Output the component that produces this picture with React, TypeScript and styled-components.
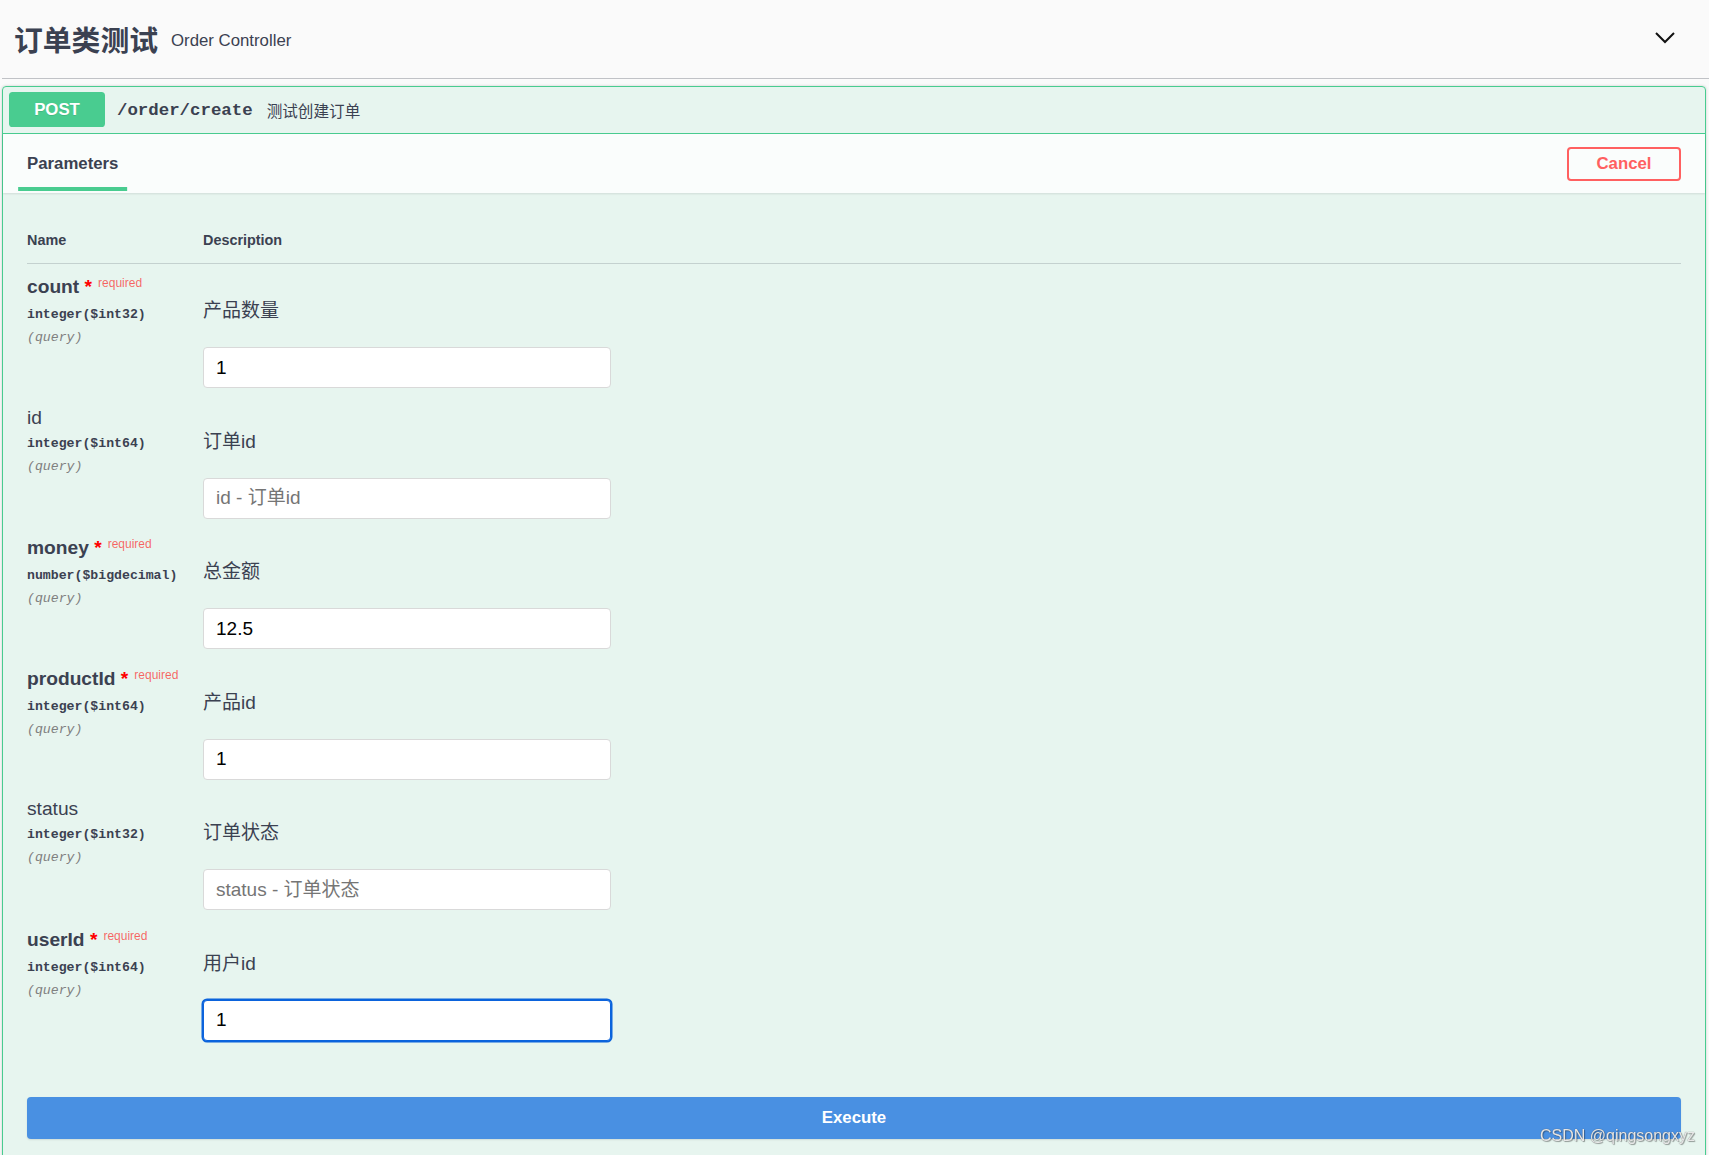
import React from "react";
import styled, { createGlobalStyle } from "styled-components";

const SANS = `"Liberation Sans", Arial, "Noto Sans CJK SC", sans-serif`;
const MONO = `"Liberation Mono", "Courier New", "Noto Sans CJK SC", monospace`;

const GlobalStyle = createGlobalStyle`
  html, body {
    margin: 0;
    padding: 0;
    background: #fafafa;
  }
  body {
    font-family: ${SANS};
    color: #3b4151;
  }
  * {
    box-sizing: border-box;
  }
`;

const Page = styled.div`
  padding-left: 2px;
  min-height: 1155px;
`;

const TagHeader = styled.div`
  display: flex;
  align-items: center;
  height: 79px;
  padding: 0 34px 0 12px;
  border-bottom: 1px solid rgba(59, 65, 81, 0.3);
`;

const TagTitle = styled.h3`
  margin: 4px 0 0;
  font-size: 28.8px;
  line-height: 1.2;
  font-weight: 700;
`;

const TagSmall = styled.small`
  margin: 4px 0 0 13px;
  font-size: 16.8px;
  line-height: 1.2;
`;

const Chevron = styled.svg`
  margin-left: auto;
  width: 20px;
  height: 12px;
  margin-top: -3px;
`;

const Opblock = styled.div`
  margin: 7px 3px 0 0;
  border: 1px solid #49cc90;
  border-radius: 4px;
  background: rgba(73, 204, 144, 0.1);
  box-shadow: 0 0 3px rgba(0, 0, 0, 0.19);
`;

const Summary = styled.div`
  display: flex;
  align-items: center;
  padding: 5px 6px 6px;
  border-bottom: 1px solid #49cc90;
`;

const Method = styled.span`
  display: flex;
  align-items: center;
  justify-content: center;
  min-width: 96px;
  height: 35px;
  padding-top: 1px;
  border-radius: 3.6px;
  background: #49cc90;
  color: #fff;
  font-size: 16.8px;
  font-weight: 700;
  text-shadow: 0 1px 0 rgba(0, 0, 0, 0.1);
`;

const Path = styled.span`
  padding: 2px 12px 0;
  font-family: ${MONO};
  font-size: 17.4px;
  font-weight: 700;
`;

const SummaryDesc = styled.span`
  margin-left: 2px;
  font-size: 15.6px;
`;

const SectionHeader = styled.div`
  display: flex;
  align-items: center;
  height: 59px;
  padding: 0 24px;
  background: rgba(255, 255, 255, 0.8);
  box-shadow: 0 1px 2px rgba(0, 0, 0, 0.1);
`;

const Tab = styled.h4`
  position: relative;
  margin: 0;
  font-size: 16.8px;
  line-height: 20px;
  font-weight: 700;

  &::after {
    content: "";
    position: absolute;
    left: 50%;
    bottom: -17px;
    width: 120%;
    height: 4px;
    transform: translateX(-50%);
    background: #49cc90;
  }
`;

const CancelButton = styled.button`
  margin-left: auto;
  width: 114px;
  height: 34px;
  border: 2px solid #ff6060;
  border-radius: 4px;
  background: transparent;
  color: #ff6060;
  font-family: ${SANS};
  font-size: 16.8px;
  font-weight: 700;
`;

const TableContainer = styled.div`
  padding: 24px 24px 26px;
`;

const HeadRow = styled.div`
  display: grid;
  grid-template-columns: 176px 1fr;
  padding: 15px 0 14px;
  border-bottom: 1px solid rgba(59, 65, 81, 0.2);
  font-size: 14.4px;
  line-height: 17px;
  font-weight: 700;
`;

const ParamRow = styled.div`
  display: grid;
  grid-template-columns: 176px 1fr;
  padding: 12px 0 6.5px;
`;

const NameCol = styled.div`
  display: flex;
  flex-direction: column;
`;

const ParamName = styled.div<{ $required?: boolean }>`
  font-size: 19.2px;
  line-height: 22px;
  font-weight: ${(p) => (p.$required ? 700 : 400)};
  white-space: nowrap;
`;

const Star = styled.span`
  color: #f00;
`;

const RequiredMark = styled.span`
  position: relative;
  top: -6px;
  padding-left: 6px;
  font-size: 12px;
  font-weight: 400;
  color: rgba(255, 0, 0, 0.6);
`;

const ParamType = styled.div`
  padding: 6px 0;
  font-family: ${MONO};
  font-size: 13.2px;
  line-height: 17px;
  font-weight: 700;
  white-space: nowrap;
`;

const ParamIn = styled.div`
  font-family: ${MONO};
  font-size: 13.2px;
  line-height: 17px;
  font-style: italic;
  color: #808080;
`;

const DescCol = styled.div`
  display: flex;
  flex-direction: column;
`;

const DescText = styled.p`
  margin: 23px 0 0;
  font-size: 19px;
  line-height: 24px;
`;

const ParamInput = styled.input<{ $focused?: boolean }>`
  display: block;
  margin-top: 24px;
  width: 408px;
  height: 41px;
  padding: 0 12px;
  border: 1px solid ${(p) => (p.$focused ? "#0b63dc" : "#d9d9d9")};
  border-radius: 4px;
  background: #fff;
  color: #000;
  font-family: ${SANS};
  font-size: 19px;
  outline: none;
  box-shadow: ${(p) => (p.$focused ? "0 0 0 1.5px #0b63dc" : "none")};

  &::placeholder {
    color: #757575;
  }
`;

const ExecuteWrapper = styled.div`
  padding: 24px 24px 24px;
`;

const ExecuteButton = styled.button`
  display: block;
  width: 100%;
  height: 42px;
  border: none;
  border-radius: 4px;
  background: #4990e2;
  box-shadow: 0 1px 2px rgba(0, 0, 0, 0.1);
  color: #fff;
  font-family: ${SANS};
  font-size: 16.8px;
  font-weight: 700;
`;

const Watermark = styled.div`
  position: fixed;
  right: 14px;
  bottom: 10px;
  font-family: ${SANS};
  font-size: 16px;
  line-height: 18px;
  color: rgba(245, 245, 245, 0.9);
  text-shadow: 0 0 1px #555, 1px 1px 1px rgba(0, 0, 0, 0.35);
  pointer-events: none;
`;

interface Param {
  name: string;
  type: string;
  desc: string;
  required: boolean;
  value?: string;
  focused?: boolean;
}

const params: Param[] = [
  { name: "count", type: "integer($int32)", desc: "产品数量", required: true, value: "1" },
  { name: "id", type: "integer($int64)", desc: "订单id", required: false },
  { name: "money", type: "number($bigdecimal)", desc: "总金额", required: true, value: "12.5" },
  { name: "productId", type: "integer($int64)", desc: "产品id", required: true, value: "1" },
  { name: "status", type: "integer($int32)", desc: "订单状态", required: false },
  { name: "userId", type: "integer($int64)", desc: "用户id", required: true, value: "1", focused: true },
];

const App = () => {
  return (
    <Page>
      <GlobalStyle />
      <TagHeader>
        <TagTitle>订单类测试</TagTitle>
        <TagSmall>Order Controller</TagSmall>
        <Chevron viewBox="0 0 20 12">
          <path d="M1 1 L10 10 L19 1" fill="none" stroke="#111" strokeWidth="2" />
        </Chevron>
      </TagHeader>
      <Opblock>
        <Summary>
          <Method>POST</Method>
          <Path>/order/create</Path>
          <SummaryDesc>测试创建订单</SummaryDesc>
        </Summary>
        <SectionHeader>
          <Tab>Parameters</Tab>
          <CancelButton>Cancel</CancelButton>
        </SectionHeader>
        <TableContainer>
          <HeadRow>
            <div>Name</div>
            <div>Description</div>
          </HeadRow>
          {params.map((p) => (
            <ParamRow key={p.name}>
              <NameCol>
                <ParamName $required={p.required}>
                  {p.name}
                  {p.required && (
                    <>
                      <Star>&nbsp;*</Star>
                      <RequiredMark>required</RequiredMark>
                    </>
                  )}
                </ParamName>
                <ParamType>{p.type}</ParamType>
                <ParamIn>(query)</ParamIn>
              </NameCol>
              <DescCol>
                <DescText>{p.desc}</DescText>
                <ParamInput
                  type="text"
                  defaultValue={p.value}
                  placeholder={`${p.name} - ${p.desc}`}
                  $focused={p.focused}
                />
              </DescCol>
            </ParamRow>
          ))}
        </TableContainer>
        <ExecuteWrapper>
          <ExecuteButton>Execute</ExecuteButton>
        </ExecuteWrapper>
      </Opblock>
      <Watermark>CSDN @qingsongxyz</Watermark>
    </Page>
  );
};

export default App;
